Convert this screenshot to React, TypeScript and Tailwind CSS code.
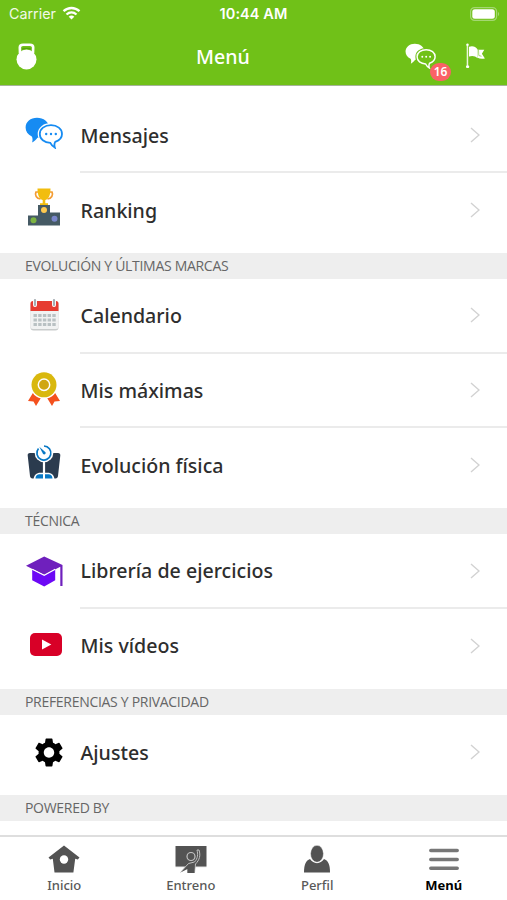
import React from "react";

const ChatIcon = ({ className, color, back }: { className?: string; color: string; back: string }) => (
  <svg viewBox="0 0 38 32" className={className} fill="none">
    <path d="M12 .8C5.500.8.600 5 .600 10.500c0 4 2.200 7 6.200 8.900.9 1.600 1 3.800.3 6 2.400-1.200 4.300-2.800 5.300-4.700 7-.2 11.600-4.600 11.600-10.200C24 5 18.500.8 12 .8z" fill={color} />
    <path d="M26 8.200c-6.400 0-11.200 3.600-11.200 8.700 0 5.300 4.500 8.800 10.500 8.900 1 2 2.300 3.400 4.500 4.800-.6-2-.5-4.100.4-5.700 4.200-1.500 6.800-4.400 6.800-8 0-5.100-4.800-8.700-11-8.700z" fill={back} stroke={back} strokeWidth="4.200" />
    <path d="M26 8.200c-6.400 0-11.200 3.600-11.200 8.700 0 5.300 4.500 8.800 10.500 8.900 1 2 2.300 3.400 4.500 4.800-.6-2-.5-4.100.4-5.700 4.200-1.500 6.800-4.400 6.800-8 0-5.100-4.800-8.700-11-8.700z" fill={back} stroke={color} strokeWidth="1.800" />
    <circle cx="21.200" cy="17" r="1.200" fill={color} />
    <circle cx="26" cy="17" r="1.200" fill={color} />
    <circle cx="30.800" cy="17" r="1.200" fill={color} />
  </svg>
);

const RankingIcon = () => (
  <svg viewBox="0 0 32 38" className="w-8 h-[38px] ml-[3px] -mt-[6px]">
    <path d="M11 4H8C6.500 7 8.500 10.700 12.500 11M21 4h3c1.500 3-.5 6.700-4.500 7" fill="none" stroke="#f39c34" strokeWidth="1.700" />
    <path d="M9.500.5h13c0 6-1.500 10.500-5.200 11.500v3.200H20V17h-8v-1.800h2.700V12C11 11 9.500 6.500 9.500.5z" fill="#f2bd0e" />
    <path d="M0 27.500h10V17h12v7.500h10V37.500H0z" fill="#455a64" />
    <circle cx="16" cy="22" r="3" fill="#ffca4f" />
    <circle cx="5.500" cy="32.300" r="3" fill="#7cb342" />
    <circle cx="26.500" cy="30.700" r="3" fill="#7986cb" />
  </svg>
);

const CalendarIcon = () => (
  <svg viewBox="0 0 30 33" className="w-[30px] h-[33px] ml-[5px] -mt-[4px]">
    <rect x=".5" y="4" width="28" height="28.500" rx="3" fill="#c9cccc" />
    <rect x=".5" y="4" width="28" height="27" rx="2.500" fill="#f1f2f2" />
    <path d="M.500 13V5.500A2.500 2.500 0 0 1 3 3h23a2.500 2.500 0 0 1 2.500 2.500V13z" fill="#e63b31" />
    <path d="M5 7V2M24 7V2" stroke="#fff" strokeWidth="4" strokeLinecap="round" />
    <path d="M5 7V2M24 7V2" stroke="#a5adb3" strokeWidth="2.200" strokeLinecap="round" />
    <g fill="#b9c1c3">
      {[16, 20.500, 25].map((y) =>
        [3.5, 8.2, 12.9, 17.6, 22.300].map((x) => <rect key={`${x}-${y}`} x={x} y={y} width="3.400" height="3" />)
      )}
    </g>
  </svg>
);

const MedalIcon = () => (
  <svg viewBox="0 0 32 35" className="w-8 h-[35px] ml-[2.500px] -mt-[3px]">
    <path d="M5.500 20L0 29l5.500.4L8 34l5.500-9zM26.500 20l5.500 9-5.500.4L24 34l-5.500-9z" fill="#f4511e" />
    <circle cx="16" cy="12.800" r="14" fill="#fff" />
    <circle cx="16" cy="12.800" r="12.500" fill="#d9b80e" />
    <circle cx="16" cy="12.800" r="5.700" fill="#d0a711" stroke="#fff" strokeWidth="1.500" />
  </svg>
);

const ScaleIcon = () => (
  <svg viewBox="0 0 34 35" className="w-[34px] h-[35px] ml-[1.500px] -mt-[4px]">
    <path d="M3 8h28c1.700 0 2.500 1 2.300 2.500L31 31c-.2 1.600-1 2.500-2.500 2.500h-23C4 33.500 3.200 32.600 3 31L.700 10.500C.500 9 1.300 8 3 8z" fill="#2b3b4e" />
    <circle cx="17" cy="8" r="9.300" fill="#fff" />
    <path d="M17 15v14" stroke="#fff" strokeWidth="2.200" />
    <path d="M6.500 35c.2-5 3-7.300 7-7.300h7c4 0 6.800 2.300 7 7.300z" fill="#fff" />
    <path d="M8.500 33.500c.2-3.300 1.800-4.300 4.500-4.300h3v4.300zM18 33.500v-4.300h3c2.700 0 4.300 1 4.500 4.300z" fill="#0878c4" />
    <path d="M17 1a7 7 0 1 1-5.500 2.500" fill="none" stroke="#0878c4" strokeWidth="1.700" />
    <path d="M12.300 1.800l6.200 5.500c.8 1.700-1.200 2.900-2.400 1.800z" fill="#0878c4" />
  </svg>
);

const CapIcon = () => (
  <svg viewBox="0 0 37 31" className="w-[37px] h-[31px] ml-[.5px]">
    <path d="M6.200 13.500l12 5.700 11-5.700v10.800l-11 6.200-12-6.200z" fill="#6c08f5" />
    <path d="M18.200.500L36.500 9v21h-2.200V10.700l-16 8.300L0 9.800z" fill="#6f20bd" />
    <path d="M6.200 13.300l12 6 11-6" fill="none" stroke="#fff" strokeWidth="1.200" />
  </svg>
);

const VideoIcon = () => (
  <svg viewBox="0 0 32 23" className="w-8 h-[23px] ml-[5px] -mt-[3px]">
    <rect width="32" height="23" rx="5" fill="#d80027" />
    <path d="M12 6.500l9.300 5-9.300 5z" fill="#fff" />
  </svg>
);

const GearIcon = () => (
  <svg viewBox="2 2 20 20" className="w-[30px] h-[29px] ml-[8.500px] mt-px" fill="#000">
    <path d="M19.140 12.940c.040-.300.060-.610.060-.940 0-.320-.020-.640-.070-.940l2.030-1.580a.490.490 0 0 0 .120-.610l-1.920-3.320a.488.488 0 0 0-.590-.220l-2.390.960c-.500-.380-1.030-.700-1.620-.940l-.360-2.540a.484.484 0 0 0-.480-.410h-3.840c-.240 0-.430.170-.470.410l-.360 2.540c-.590.240-1.130.570-1.620.940l-2.390-.960c-.220-.080-.470 0-.590.220L2.740 8.870c-.120.210-.080.470.120.610l2.030 1.580c-.050.300-.090.630-.090.940s.020.640.070.940l-2.030 1.580a.490.490 0 0 0-.120.610l1.920 3.320c.120.220.370.290.590.220l2.390-.960c.500.380 1.030.700 1.620.940l.360 2.540c.050.240.240.410.480.410h3.840c.240 0 .440-.170.470-.410l.360-2.540c.590-.240 1.130-.560 1.620-.940l2.390.960c.220.080.470 0 .590-.220l1.920-3.320c.120-.220.070-.470-.120-.610l-2.010-1.580zM12 15.600c-1.980 0-3.600-1.620-3.600-3.600s1.620-3.600 3.600-3.600 3.600 1.620 3.600 3.600-1.620 3.600-3.600 3.600z" />
  </svg>
);

type Item = { label: string; icon: React.ReactNode };

const sections: { title?: string; items: Item[] }[] = [
  {
    items: [
      { label: "Mensajes", icon: <ChatIcon className="w-[38px] h-8 -mt-[5px]" color="#168bf2" back="#fff" /> },
      { label: "Ranking", icon: <RankingIcon /> },
    ],
  },
  {
    title: "EVOLUCIÓN Y ÚLTIMAS MARCAS",
    items: [
      { label: "Calendario", icon: <CalendarIcon /> },
      { label: "Mis máximas", icon: <MedalIcon /> },
      { label: "Evolución física", icon: <ScaleIcon /> },
    ],
  },
  {
    title: "TÉCNICA",
    items: [
      { label: "Librería de ejercicios", icon: <CapIcon /> },
      { label: "Mis vídeos", icon: <VideoIcon /> },
    ],
  },
  {
    title: "PREFERENCIAS Y PRIVACIDAD",
    items: [{ label: "Ajustes", icon: <GearIcon /> }],
  },
  { title: "POWERED BY", items: [] },
];

const MenuRow = ({ label, icon, last }: Item & { last: boolean }) => (
  <div className={last ? "flex h-[80px] pl-[25px] pb-[6.500px]" : "flex h-[74.500px] pl-[25px]"}>
    <div className="w-[55px] shrink-0 flex items-center">{icon}</div>
    <div className={`flex-1 flex items-center justify-between pr-[27px] ${last ? "" : "border-b-2 border-[#ebebeb]"}`}>
      <span className="pl-[.5px] pt-[1px] text-[19.600px] font-medium text-[#2e2e2e]">{label}</span>
      <svg viewBox="0 0 10 16" className="w-[10px] h-4" fill="none" stroke="#d2d2d2" strokeWidth="1.400">
        <path d="M1 1l8 7-8 7" />
      </svg>
    </div>
  </div>
);

const StatusBar = () => (
  <div className="h-7 px-[9px] grid grid-cols-3 items-center text-white font-['Inter',sans-serif]">
    <div className="flex items-center gap-[6px] -mt-px">
      <span className="text-[14.300px] text-[#f1f9e8]">Carrier</span>
      <svg viewBox="0 0 18 14" className="w-[19px] h-[14px] -mt-px" fill="none" stroke="#fff" strokeWidth="2.300">
        <path d="M1 5.200c4.700-4.300 11.300-4.300 16 0M4 8.500c3-2.700 7-2.700 10 0" />
        <path d="M9 13.500L6.200 10.700c1.700-1.500 3.900-1.500 5.600 0z" fill="#fff" stroke="none" />
      </svg>
    </div>
    <span className="text-center text-[14.500px] font-semibold tracking-[.1px]">10:44 AM</span>
    <svg viewBox="0 0 30 14" className="w-[30px] h-[14px] justify-self-end -mt-px -mr-[2px]">
      <rect x=".6" y=".6" width="26" height="12.800" rx="4" fill="none" stroke="#a4d772" strokeWidth="1.200" />
      <rect x="2.300" y="2.300" width="22.500" height="9.400" rx="2.500" fill="#fff" />
      <path d="M28 5v4c1.500-.6 1.500-3.400 0-4z" fill="#a4d772" />
    </svg>
  </div>
);

const Header = () => (
  <div className="h-[86px] shrink-0 bg-[#70c118] border-b border-[#a5b498]">
    <StatusBar />
    <div className="h-14 flex items-center text-white">
      <svg viewBox="0 0 21 27" className="w-[21px] h-[27px] ml-4">
        <path d="M4 10L3.800 4.500C3.800 2.500 5 1.700 7 1.700h7c2 0 3.200.8 3.200 2.800L17 10" fill="none" stroke="#fff" strokeWidth="2.600" />
        <circle cx="10.500" cy="16.500" r="10" fill="#fff" />
        <path d="M6 6.800c0-1.600.5-2 1.800-2h5.400c1.300 0 1.800.4 1.800 2-2.800-1.100-6.200-1.100-9 0z" fill="#57a20d" />
      </svg>
      <h1 className="flex-1 pl-[159px] pt-px text-[19.600px] font-medium">Menú</h1>
      <div className="relative mr-[30px]">
        <ChatIcon className="w-[31px] h-[26px]" color="#fff" back="#70c118" />
        <span className="absolute left-[25px] top-[20px] w-[21px] h-[18px] rounded-full bg-[#fa6266] text-[12px] leading-[18px] font-semibold text-center">
          16
        </span>
      </div>
      <svg viewBox="0 0 20 26" className="w-5 h-[26px] mr-[21px]" fill="#fff">
        <path d="M.700 1.500h1.500V23H.700z" opacity=".85" />
        <circle cx="1.500" cy="1.700" r="1.200" />
        <rect x="0" y="22.500" width="3.200" height="2.500" rx="1" />
        <path d="M3 3.800c3.500-1.500 6.500-.3 8.500 2.500v9c-2.200-2.300-5-3-8.500-1.800z" />
        <path d="M11.500 6.800h6.800l-2.400 4 3 4.700c-3 .5-5.300.4-7.400-.8z" />
        <path d="M12.500 6.800l.3 5.700 2.700.8" fill="none" stroke="#70c118" strokeWidth=".6" />
      </svg>
    </div>
  </div>
);

const tabs = [
  {
    label: "Inicio",
    icon: (
      <svg viewBox="0 0 32 28" className="w-8 h-7">
        <path d="M16 .500L31.500 12.500l-1.700 2-2.600-.8-1.800 13.800H6.500L4.800 13.700l-2.600.8L.500 12.500z" fill="#535353" />
        <circle cx="16" cy="14.500" r="4.200" fill="#fff" />
      </svg>
    ),
  },
  {
    label: "Entreno",
    icon: (
      <svg viewBox="0 0 32 28" className="w-8 h-7">
        <path d="M.500 1h31v20h-31z" fill="#535353" />
        <path d="M.500 21.600h31" stroke="#909090" strokeWidth="1" />
        <path d="M5.500 27.500l8-9 6-1.500c3.500-3.500 3.500-8 2.500-12h2c1.800 5.500.5 10-3.500 14l-1 8.500h-7V22" fill="#535353" stroke="#c0c0c0" strokeWidth="1" />
        <path d="M6 27.300l6.500-6.800h7V28h-7v-4z" fill="#535353" />
        <circle cx="16" cy="11.500" r="4" fill="#535353" stroke="#c4c4c4" strokeWidth="1.200" />
      </svg>
    ),
  },
  {
    label: "Perfil",
    icon: (
      <svg viewBox="0 0 28 28" className="w-7 h-7" fill="#535353">
        <path d="M7 14C3 15.500 1 19 1 27.500h26c0-8.500-2-12-6-13.500-3.500 5.500-10.500 5.500-14 0z" />
        <ellipse cx="14" cy="8.800" rx="6.500" ry="8.500" stroke="#fff" strokeWidth=".5" />
      </svg>
    ),
  },
  {
    label: "Menú",
    icon: (
      <svg viewBox="0 0 30 28" className="w-[30px] h-7" stroke="#777" strokeWidth="3.500" strokeLinecap="round">
        <path d="M1.800 5.500h26.400M1.800 14.500h26.400M1.800 23.200h26.400" />
      </svg>
    ),
  },
];

const TabBar = () => (
  <div className="h-[65.500px] shrink-0 grid grid-cols-4 bg-white border-t-2 border-[#dedede] pl-px">
    {tabs.map((tab) => (
      <div key={tab.label} className="flex flex-col items-center pt-[8px]">
        {tab.icon}
        <span
          className={
            tab.label === "Menú"
              ? "text-[13px] leading-[18px] mt-[3px] font-bold text-black"
              : "text-[13px] leading-[18px] mt-[3px] font-medium text-[#595959]"
          }
        >
          {tab.label}
        </span>
      </div>
    ))}
  </div>
);

const App = () => {
  return (
    <div className="h-screen flex flex-col overflow-hidden bg-white font-['Noto_Sans',sans-serif]">
      <Header />
      <div className="flex-1 min-h-0 overflow-hidden pt-[12.500px]">
        {sections.map((section, i) => (
          <div key={i}>
            {section.title && (
              <h2 className="h-[26.200px] pl-[25px] bg-[#eeeeee] font-['Open_Sans',sans-serif] text-[14px] tracking-[-.3px] leading-[26px] text-[#666]">
                {section.title}
              </h2>
            )}
            {section.items.map((item, j) => (
              <MenuRow key={item.label} {...item} last={j === section.items.length - 1} />
            ))}
          </div>
        ))}
      </div>
      <TabBar />
    </div>
  );
};

export default App;
